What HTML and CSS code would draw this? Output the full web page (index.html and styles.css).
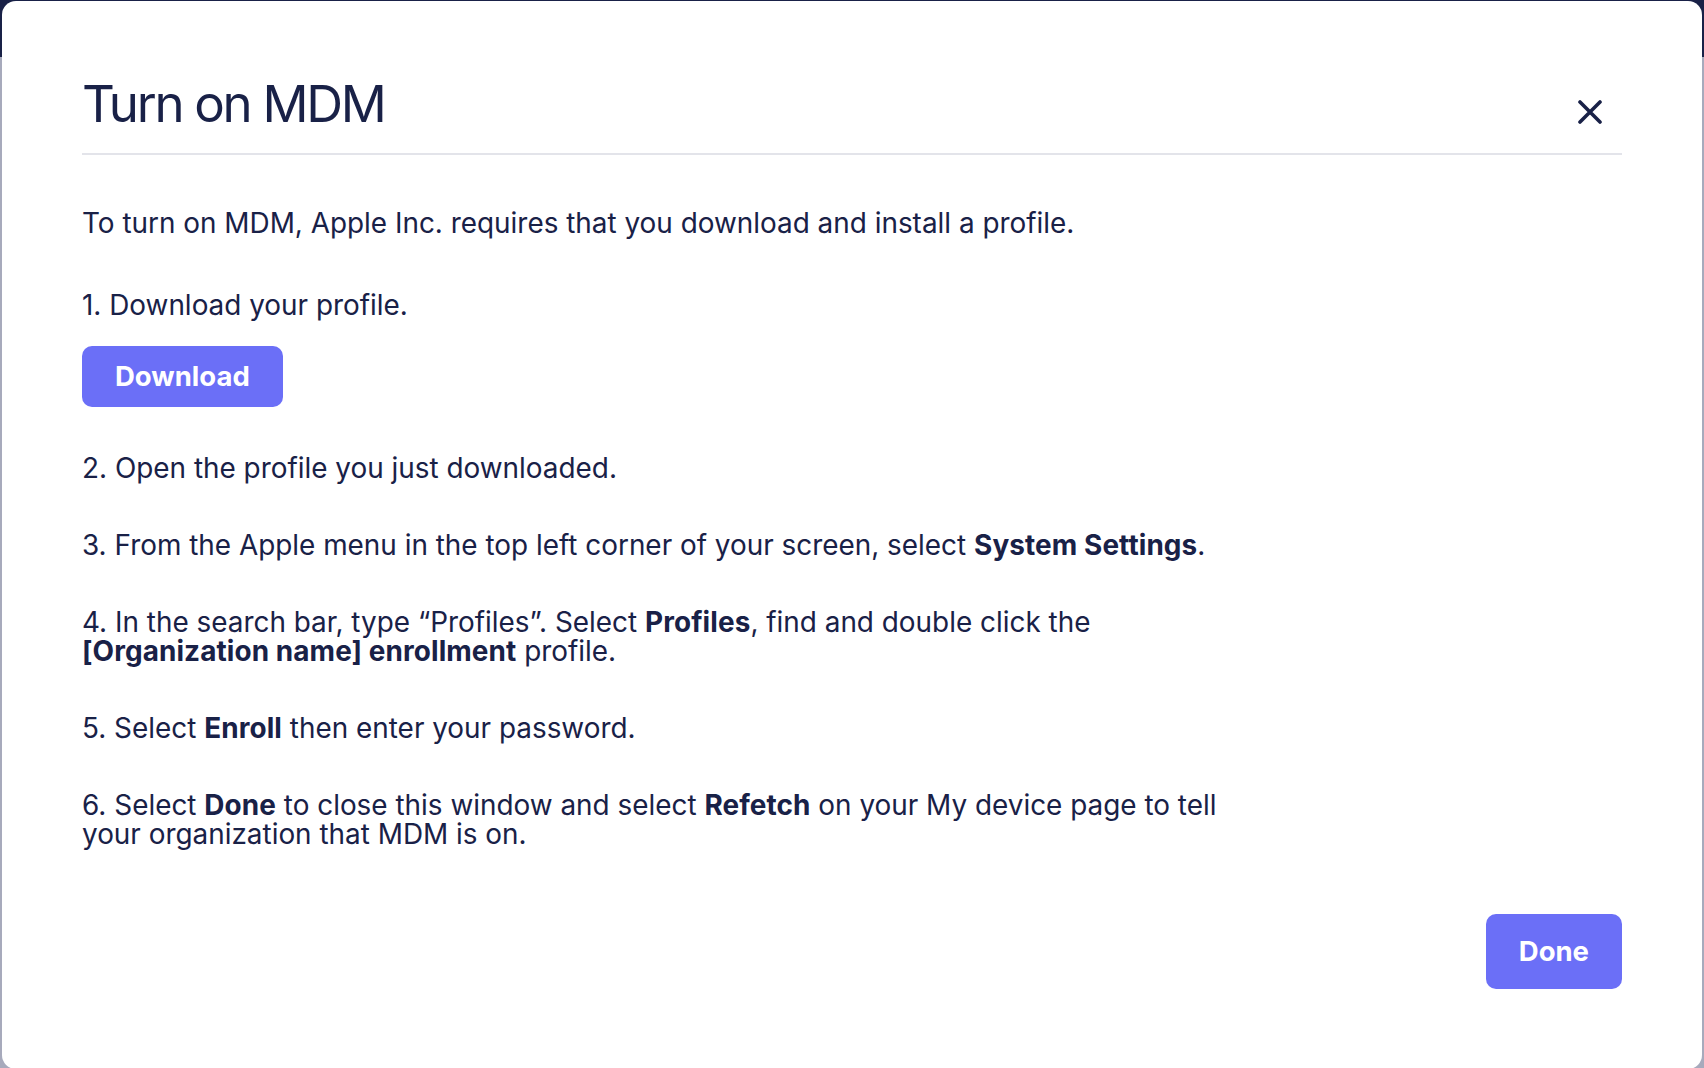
FILE: index.html
```html
<!DOCTYPE html>
<html lang="en">
<head>
<meta charset="utf-8">
<title>Turn on MDM</title>
<link rel="stylesheet" href="styles.css">
</head>
<body>
<div class="page">
  <div class="topbar"></div>
  <div class="backdrop"></div>
</div>
<div class="modal" role="dialog" aria-labelledby="modal-title">
  <div class="modal-header">
    <h1 class="modal-title" id="modal-title">Turn on MDM</h1>
    <button class="modal-close" aria-label="Close">
      <svg width="24" height="24" viewBox="0 0 24 24" aria-hidden="true">
        <path d="M2 2 L22 22 M22 2 L2 22" stroke="#192147" stroke-width="3.6" stroke-linecap="round" fill="none"/>
      </svg>
    </button>
  </div>
  <div class="modal-body">
    <p class="intro">To turn on MDM, Apple Inc. requires that you download and install a profile.</p>
    <div class="step step-first">
      <p>1. Download your profile.</p>
      <button class="btn btn-download">Download</button>
    </div>
    <p class="step">2. Open the profile you just downloaded.</p>
    <p class="step">3. From the Apple menu in the top left corner of your screen, select <b>System Settings</b>.</p>
    <p class="step">4. In the search bar, type “Profiles”. Select <b>Profiles</b>, find and double click the <b>[Organization name] enrollment</b> profile.</p>
    <p class="step">5. Select <b>Enroll</b> then enter your password.</p>
    <p class="step">6. Select <b>Done</b> to close this window and select <b>Refetch</b> on your My device page to tell your organization that MDM is on.</p>
  </div>
  <div class="modal-footer">
    <button class="btn btn-done">Done</button>
  </div>
</div>
</body>
</html>
```

FILE: styles.css
```css
* { box-sizing: border-box; }
html, body { margin: 0; padding: 0; }
body {
  width: 1704px;
  height: 1068px;
  overflow: hidden;
  font-family: Inter, "Noto Sans", sans-serif;
  color: #192147;
  background: #a7aabc;
}
.page {
  display: flex;
  flex-direction: column;
  height: 100%;
}
.topbar {
  height: 57px;
  background: #192147;
  flex: none;
}
.backdrop {
  flex: 1;
  background: #a7aabc;
}
.modal {
  position: absolute;
  top: 1px;
  left: 2px;
  width: 1700px;
  background: #ffffff;
  border-radius: 14px;
  padding: 72px 80px 80px;
}
.modal-header {
  display: flex;
  justify-content: space-between;
  align-items: flex-start;
  border-bottom: 2px solid #e3e4ea;
  padding-bottom: 18px;
}
.modal-title {
  margin: 0;
  font-size: 51px;
  font-weight: 400;
  line-height: 62px;
  letter-spacing: -2.3px;
}
.modal-close {
  margin: 27px 20px 0 0;
  padding: 0;
  width: 24px;
  height: 24px;
  border: 0;
  background: none;
  display: flex;
}
.modal-body {
  padding-top: 54px;
  max-width: 1170px;
  font-size: 27.9px;
  line-height: 29.4px;
}
.modal-body p { margin: 0; }
.modal-body b { font-weight: 700; letter-spacing: 0.1px; }
.intro { margin-bottom: 53px !important; }
.step { margin-bottom: 47.4px !important; }
.step-first p { margin-bottom: 25px; }
.step:last-child { margin-bottom: 0 !important; }
.btn {
  font-family: Inter, "Noto Sans", sans-serif;
  font-size: 27.5px;
  font-weight: 700;
  color: #ffffff;
  background: #6b6ff7;
  border: 0;
  border-radius: 10px;
  padding: 0 33px;
  display: flex;
  align-items: center;
  justify-content: center;
}
.btn-download { height: 61px; }
.modal-footer {
  display: flex;
  justify-content: flex-end;
  padding-top: 64px;
}
.btn-done { height: 75px; }
```
